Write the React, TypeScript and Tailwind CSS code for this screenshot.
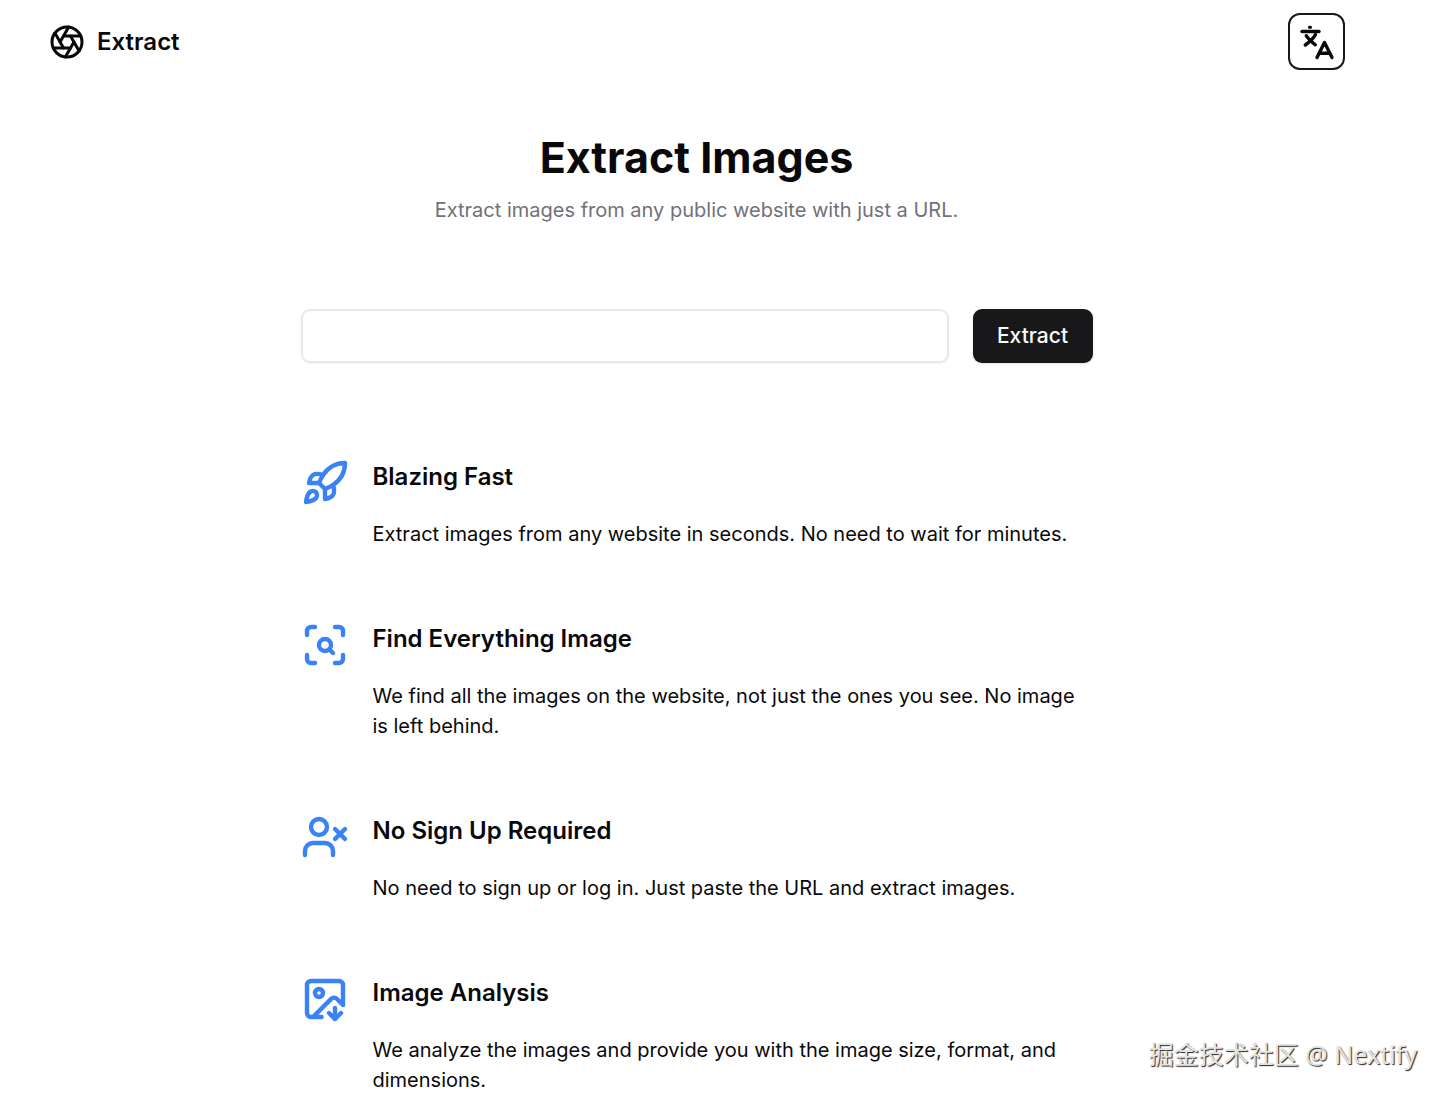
import React, { useState, ChangeEvent, FormEvent } from 'react';
import { Aperture, ImageDown, Rocket, ScanSearch, UserX, type LucideIcon } from 'lucide-react';

interface Feature {
  icon: LucideIcon;
  title: string;
  description: string;
}

const features: Feature[] = [
  {
    icon: Rocket,
    title: 'Blazing Fast',
    description: 'Extract images from any website in seconds. No need to wait for minutes.',
  },
  {
    icon: ScanSearch,
    title: 'Find Everything Image',
    description:
      'We find all the images on the website, not just the ones you see. No image is left behind.',
  },
  {
    icon: UserX,
    title: 'No Sign Up Required',
    description: 'No need to sign up or log in. Just paste the URL and extract images.',
  },
  {
    icon: ImageDown,
    title: 'Image Analysis',
    description:
      'We analyze the images and provide you with the image size, format, and dimensions.',
  },
];

function TranslateIcon() {
  return (
    <svg
      viewBox="0 0 36 36"
      className="size-9"
      fill="none"
      stroke="currentColor"
      strokeWidth="3.4"
      strokeLinecap="round"
      strokeLinejoin="round"
      aria-hidden="true"
    >
      <path d="M10.500 3.200h1" strokeWidth="3" />
      <path d="M3 7.500h17" />
      <path d="M16.500 10.500C14.500 14.500 10.500 18 6.300 21" />
      <path d="M7.300 11.800C9.300 15 12.500 18 16.300 20.800" />
      <path d="M18 33.500 25.500 18.500 33 33.500" />
      <path d="M20.500 29.200h10" />
    </svg>
  );
}

function Header() {
  return (
    <header className="flex items-center justify-between pt-[13px] pr-12 pb-3 pl-[49px]">
      <a href="#" className="flex items-center gap-3">
        <Aperture className="size-9" />
        <span className="text-2xl leading-9 font-semibold">Extract</span>
      </a>
      <button
        type="button"
        aria-label="Change language"
        className="flex size-[57px] items-center justify-center rounded-xl border-2 border-[#18181b] bg-white"
      >
        <TranslateIcon />
      </button>
    </header>
  );
}

function FeatureItem({ icon: Icon, title, description }: Feature) {
  return (
    <li className="flex items-start gap-6">
      <Icon className="size-12 shrink-0 text-[#3b82f6]" strokeWidth={2.2} />
      <div>
        <h2 className="text-2xl leading-9 font-semibold">{title}</h2>
        <p className="mt-6 text-[20px] leading-[30px]">{description}</p>
      </div>
    </li>
  );
}

export default function App() {
  const [url, setUrl] = useState('');

  const handleChange = (e: ChangeEvent<HTMLInputElement>) => {
    setUrl(e.target.value);
  };

  const handleSubmit = (e: FormEvent) => {
    e.preventDefault();
  };

  return (
    <div className="relative min-h-screen bg-white pr-[54px] font-['Inter','Noto_Sans_CJK_SC',sans-serif] text-[#09090b]">
      <Header />

      <main className="mx-auto max-w-[792px] pt-12">
        <div className="text-center">
          <h1 className="text-[43px] leading-[54px] font-bold">Extract Images</h1>
          <p className="mt-[11px] text-[20px] leading-[30px] text-[#71717a]">
            Extract images from any public website with just a URL.
          </p>
        </div>

        <form onSubmit={handleSubmit} className="mt-[84px] flex gap-6">
          <input
            type="url"
            aria-label="Website URL"
            value={url}
            onChange={handleChange}
            className="h-[54px] min-w-0 flex-1 rounded-[9px] border-2 border-[#e8e8ea] px-4 text-[20px] shadow-xs outline-none"
          />
          <button
            type="submit"
            className="h-[54px] w-[120px] rounded-[9px] bg-[#18181b] text-[21px] font-medium text-[#fafafa] shadow-sm"
          >
            Extract
          </button>
        </form>

        <ul className="mt-24 flex flex-col gap-[72px]">
          {features.map((feature) => (
            <FeatureItem key={feature.title} {...feature} />
          ))}
        </ul>
      </main>

      <div className="absolute right-[30px] bottom-[26px] font-['Noto_Sans','Noto_Sans_CJK_SC',sans-serif] text-[25px] leading-9 text-[#e4e4e4] [text-shadow:1px_1px_1px_#222]">
        掘金技术社区 @ Nextify
      </div>
    </div>
  );
}
